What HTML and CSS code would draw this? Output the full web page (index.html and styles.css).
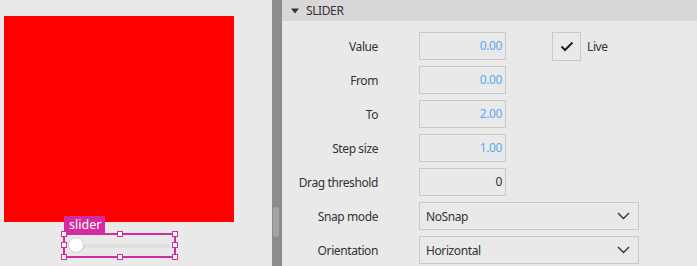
FILE: index.html
```html
<!DOCTYPE html>
<html lang="en">
<head>
    <meta charset="UTF-8">
    <title>Slider properties</title>
    <link rel="stylesheet" href="styles.css">
</head>
<body>
    <div class="canvas">
        <div class="rect"></div>
        <div class="item">
            <div class="tag">slider</div>
            <div class="track"></div>
            <div class="knob"></div>
            <span class="h tl"></span><span class="h tm"></span><span class="h tr"></span>
            <span class="h ml"></span><span class="h mr"></span>
            <span class="h bl"></span><span class="h bm"></span><span class="h br"></span>
        </div>
    </div>
    <div class="splitter"><div class="thumb"></div></div>
    <div class="props">
        <div class="section">
            <svg width="8" height="6" viewBox="0 0 8 6"><path d="M0 0.5 L8 0.5 L4 5.5 Z" fill="#333"/></svg>
            <span>SLIDER</span>
        </div>
        <div class="rows">
            <div class="row">
                <label>Value</label>
                <div class="field num">0.00</div>
                <div class="check">
                    <svg width="14" height="11" viewBox="0 0 14 11"><path d="M1.5 5.5 L5 9 L12.5 1.5" fill="none" stroke="#222" stroke-width="2"/></svg>
                </div>
                <span class="check-label">Live</span>
            </div>
            <div class="row">
                <label>From</label>
                <div class="field num">0.00</div>
            </div>
            <div class="row">
                <label>To</label>
                <div class="field num">2.00</div>
            </div>
            <div class="row">
                <label>Step size</label>
                <div class="field num">1.00</div>
            </div>
            <div class="row">
                <label>Drag threshold</label>
                <div class="field int">0</div>
            </div>
            <div class="row">
                <label>Snap mode</label>
                <div class="combo">
                    <span>NoSnap</span>
                    <svg width="13" height="8" viewBox="0 0 13 8"><path d="M1 1 L6.5 6.5 L12 1" fill="none" stroke="#333" stroke-width="1.4"/></svg>
                </div>
            </div>
            <div class="row">
                <label>Orientation</label>
                <div class="combo">
                    <span>Horizontal</span>
                    <svg width="13" height="8" viewBox="0 0 13 8"><path d="M1 1 L6.5 6.5 L12 1" fill="none" stroke="#333" stroke-width="1.4"/></svg>
                </div>
            </div>
        </div>
    </div>
</body>
</html>
```

FILE: styles.css
```css
body {
    margin: 0;
    display: flex;
    height: 266px;
    overflow: hidden;
    background: #eaeaea;
    font-family: "Noto Sans", "Open Sans", sans-serif;
    font-size: 12px;
    letter-spacing: -0.4px;
    color: #333;
}
.canvas {
    width: 272px;
    flex: none;
    background: #e9e9e9;
}
.rect {
    width: 230px;
    height: 206px;
    margin: 16px 0 0 4px;
    background: #ff0000;
}
.item {
    position: relative;
    width: 109px;
    height: 21px;
    margin: 11px 0 0 63px;
    border: 2px solid #d42c9e;
    box-sizing: content-box;
}
.tag {
    position: absolute;
    left: -1px;
    top: -19px;
    height: 17px;
    padding: 0 4px 0 5px;
    background: #d42c9e;
    color: #fff;
    font-size: 12.5px;
    letter-spacing: 0;
    line-height: 17px;
    border-radius: 1px 1px 0 0;
}
.track {
    position: absolute;
    left: 10px;
    right: 4px;
    top: 9px;
    height: 4px;
    background: #dedede;
}
.knob {
    position: absolute;
    left: 3px;
    top: 2px;
    width: 14px;
    height: 14px;
    border-radius: 50%;
    background: #fff;
    border: 1px solid #cfcfcf;
}
.h {
    position: absolute;
    width: 4px;
    height: 4px;
    background: #fff;
    border: 1px solid #d42c9e;
}
.tl { left: -4px; top: -4px; }
.tm { left: 52px; top: -4px; }
.tr { right: -4px; top: -4px; }
.ml { left: -4px; top: 7px; }
.mr { right: -4px; top: 7px; }
.bl { left: -4px; bottom: -4px; }
.bm { left: 52px; bottom: -4px; }
.br { right: -4px; bottom: -4px; }

.splitter {
    width: 10px;
    flex: none;
    background: #8c8c8c;
    position: relative;
}
.thumb {
    position: absolute;
    left: 1px;
    top: 207px;
    width: 6px;
    height: 30px;
    background: #a4a4a4;
    border-radius: 3px;
}
.props {
    flex: 1;
    background: #e9e9e9;
}
.section {
    height: 21px;
    background: #d8d8d8;
    display: flex;
    align-items: center;
    padding-left: 9px;
    gap: 7px;
    color: #333;
}
.rows {
    padding-top: 11px;
    display: flex;
    flex-direction: column;
    gap: 6px;
}
.row {
    display: flex;
    align-items: center;
    height: 28px;
}
.row label {
    width: 96px;
    text-align: right;
    margin-right: 41px;
}
.field {
    width: 87px;
    height: 28px;
    box-sizing: border-box;
    border: 1px solid #c9c9c9;
    text-align: right;
    padding-right: 3px;
    line-height: 26px;
}
.num {
    color: #5aa9f2;
}
.int {
    color: #333;
}
.check {
    width: 29px;
    height: 29px;
    box-sizing: border-box;
    border: 1px solid #c9c9c9;
    margin-left: 46px;
    display: flex;
    align-items: center;
    justify-content: center;
}
.check-label {
    margin-left: 6px;
}
.combo {
    width: 220px;
    height: 28px;
    box-sizing: border-box;
    border: 1px solid #c9c9c9;
    display: flex;
    align-items: center;
    justify-content: space-between;
    padding: 0 8px 0 6px;
}
```
